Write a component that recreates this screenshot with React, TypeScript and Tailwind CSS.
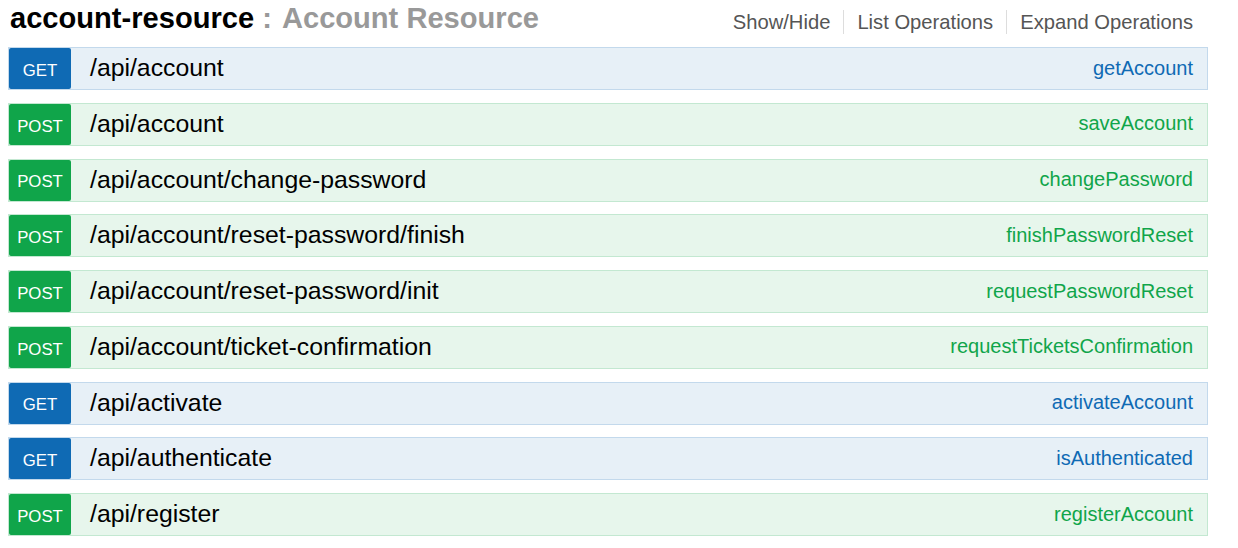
type Method = 'GET' | 'POST'

interface Endpoint {
  method: Method
  path: string
  nickname: string
}

const endpoints: Endpoint[] = [
  { method: 'GET', path: '/api/account', nickname: 'getAccount' },
  { method: 'POST', path: '/api/account', nickname: 'saveAccount' },
  { method: 'POST', path: '/api/account/change-password', nickname: 'changePassword' },
  { method: 'POST', path: '/api/account/reset-password/finish', nickname: 'finishPasswordReset' },
  { method: 'POST', path: '/api/account/reset-password/init', nickname: 'requestPasswordReset' },
  { method: 'POST', path: '/api/account/ticket-confirmation', nickname: 'requestTicketsConfirmation' },
  { method: 'GET', path: '/api/activate', nickname: 'activateAccount' },
  { method: 'GET', path: '/api/authenticate', nickname: 'isAuthenticated' },
  { method: 'POST', path: '/api/register', nickname: 'registerAccount' },
]

function OperationRow({ method, path, nickname }: Endpoint) {
  const isGet = method === 'GET'
  return (
    <div
      className={`flex items-center h-[43px] mb-[12.75px] border ${
        isGet ? 'bg-[#e7f0f7] border-[#c3d9ec]' : 'bg-[#e7f6ec] border-[#c3e8d1]'
      }`}
    >
      {/* Method badge */}
      <div
        className={`w-[62px] h-full rounded-[2px] flex items-center justify-center pt-[4px] text-white text-[16.8px] ${
          isGet ? 'bg-[#0f6ab4]' : 'bg-[#10a54a]'
        }`}
      >
        {method}
      </div>
      <div className="flex-1 pl-[19px] text-[24.8px] text-black leading-none">{path}</div>
      <div
        className={`pr-[14px] pb-[2px] text-[20px] leading-none ${isGet ? 'text-[#0f6ab4]' : 'text-[#10a54a]'}`}
      >
        {nickname}
      </div>
    </div>
  )
}

export default function App() {
  return (
    <div className="w-[1238px] h-[548px] bg-white overflow-hidden px-2 font-['Liberation_Sans',Arial,sans-serif]">
      <div className="w-[1200px]">
        {/* Heading */}
        <div className="flex items-start justify-between h-[47px]">
          <h2 className="pl-[2px] pt-[1px] text-[29.1px] leading-[34px] font-bold">
            <span className="text-black">account-resource</span>
            <span className="text-[#999]"> :</span>
            <span className="text-[#999] ml-[10px]">Account Resource</span>
          </h2>
          <ul className="flex items-center mt-[10px] pr-[15px] text-[20.2px] leading-[24px] text-[#555]">
            <li className="pr-[13px]">Show/Hide</li>
            <li className="px-[13px] border-l border-[#ddd]">List Operations</li>
            <li className="pl-[13px] border-l border-[#ddd]">Expand Operations</li>
          </ul>
        </div>

        {endpoints.map((ep, i) => (
          <OperationRow key={i} {...ep} />
        ))}
      </div>
    </div>
  )
}
